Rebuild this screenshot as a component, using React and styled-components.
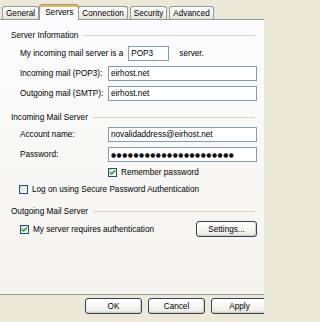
import React from "react";
import styled, { createGlobalStyle } from "styled-components";

const GlobalStyle = createGlobalStyle`
  html, body {
    margin: 0;
    padding: 0;
    background: #ece9d8;
  }
  body {
    font-family: "Liberation Sans", Arial, sans-serif;
    font-size: 8.2px;
    color: #000;
  }
`;

const Dialog = styled.div`
  width: 264px;
  height: 322px;
  display: flex;
  flex-direction: column;
  overflow: hidden;
  background: #ece9d8;
`;

const TabStrip = styled.div`
  height: 19px;
  display: flex;
  align-items: flex-end;
  padding-left: 2px;
`;

const Tab = styled.div`
  position: relative;
  box-sizing: border-box;
  height: ${(p) => (p.$active ? "16px" : "13px")};
  margin: ${(p) => (p.$active ? "0 -1px -1px -2px" : "0 2px 0 0")};
  padding: ${(p) => (p.$active ? "0 5px" : "0 3px")};
  display: flex;
  align-items: center;
  border: 1px solid #919b9c;
  border-bottom: none;
  border-radius: 3px 3px 0 0;
  background: ${(p) =>
    p.$active ? "#fcfcfe" : "linear-gradient(#fefefe, #f0efe9 70%, #e3e1d6)"};
  box-shadow: ${(p) => (p.$active ? "inset 0 2px 0 #f4b545" : "none")};
  z-index: ${(p) => (p.$active ? 1 : 0)};
  white-space: nowrap;
`;

const Panel = styled.div`
  box-sizing: border-box;
  height: 276px;
  border-top: 1px solid #919b9c;
  border-bottom: 1px solid #919b9c;
  background: linear-gradient(#fcfcfe, #f4f3ee);
  padding: 9px 7px 0 11px;
  display: flex;
  flex-direction: column;
`;

const GroupTitle = styled.div`
  height: 12px;
  margin-top: ${(p) => p.$mt || 0}px;
  display: flex;
  align-items: center;
  gap: 5px;
  white-space: nowrap;

  &::after {
    content: "";
    flex: 1;
    height: 1px;
    margin-right: 2px;
    background: #d6d6c8;
  }
`;

const Row = styled.div`
  display: flex;
  align-items: center;
  height: ${(p) => p.$h || 15}px;
  margin-top: ${(p) => p.$mt || 0}px;
  margin-left: ${(p) => (p.$ml === undefined ? 9 : p.$ml)}px;
  padding-left: ${(p) => p.$pl || 0}px;
  white-space: nowrap;
`;

const Label = styled.span`
  width: ${(p) => (p.$w ? `${p.$w}px` : "auto")};
  flex-shrink: 0;
`;

const TextBox = styled.div`
  box-sizing: border-box;
  height: 15px;
  flex: ${(p) => (p.$w ? "none" : 1)};
  min-width: 0;
  width: ${(p) => (p.$w ? `${p.$w}px` : "auto")};
  margin: ${(p) => p.$m || 0};
  border: 1px solid #7f9db9;
  background: #fff;
  padding: 0 2px;
  display: flex;
  align-items: center;
  overflow: hidden;
`;

const Dots = styled.span`
  font-family: "DejaVu Sans", sans-serif;
  font-size: 5.8px;
  letter-spacing: 0.55px;
  color: #111;
`;

const Box = styled.span`
  box-sizing: border-box;
  width: 9px;
  height: 9px;
  margin-right: 4px;
  border: 1px solid #1c5180;
  background: linear-gradient(135deg, #dcdcd7, #fbfbf9);
  display: flex;
  align-items: center;
  justify-content: center;
  flex-shrink: 0;
`;

const Button = styled.div`
  box-sizing: border-box;
  width: ${(p) => p.$w || 57}px;
  height: 16px;
  margin-left: ${(p) => (p.$auto ? "auto" : "0")};
  border: 1px solid #2f4259;
  border-radius: 3px;
  background: linear-gradient(#ffffff, #f1f0eb 80%, #dcd9cd);
  box-shadow: inset -1px -1px 0 #d6d0c5;
  display: flex;
  align-items: center;
  justify-content: center;
  flex-shrink: 0;
`;

const Footer = styled.div`
  display: flex;
  gap: 6px;
  padding: 3px 0 0 85px;
`;

const CheckBox = ({ checked }) => (
  <Box>
    {checked && (
      <svg width="7" height="7" viewBox="0 0 7 7">
        <path d="M0.8 3.2 L2.6 5 L6.2 1.4" fill="none" stroke="#21a121" strokeWidth="1.4" />
      </svg>
    )}
  </Box>
);

const tabs = ["General", "Servers", "Connection", "Security", "Advanced"];

export default function App() {
  return (
    <>
      <GlobalStyle />
      <Dialog>
        <TabStrip>
          {tabs.map((t) => (
            <Tab key={t} $active={t === "Servers"}>
              {t}
            </Tab>
          ))}
        </TabStrip>

        <Panel>
          <GroupTitle>Server Information</GroupTitle>
          <Row $mt={5}>
            <Label>My incoming mail server is a</Label>
            <TextBox $w={41} $m="0 10px 0 5px">POP3</TextBox>
            <Label>server.</Label>
          </Row>
          <Row $mt={5}>
            <Label $w={88}>Incoming mail (POP3):</Label>
            <TextBox>eirhost.net</TextBox>
          </Row>
          <Row $mt={5}>
            <Label $w={88}>Outgoing mail (SMTP):</Label>
            <TextBox>eirhost.net</TextBox>
          </Row>

          <GroupTitle $mt={10}>Incoming Mail Server</GroupTitle>
          <Row $mt={4}>
            <Label $w={88}>Account name:</Label>
            <TextBox>novalidaddress@eirhost.net</TextBox>
          </Row>
          <Row $mt={5}>
            <Label $w={88}>Password:</Label>
            <TextBox>
              <Dots>{"●".repeat(22)}</Dots>
            </TextBox>
          </Row>
          <Row $mt={5} $h={10} $pl={88}>
            <CheckBox checked />
            <Label>Remember password</Label>
          </Row>
          <Row $mt={7} $h={10} $ml={8}>
            <CheckBox />
            <Label>Log on using Secure Password Authentication</Label>
          </Row>

          <GroupTitle $mt={11}>Outgoing Mail Server</GroupTitle>
          <Row $mt={4} $h={16}>
            <CheckBox checked />
            <Label>My server requires authentication</Label>
            <Button $w={61} $auto>
              Settings...
            </Button>
          </Row>
        </Panel>

        <Footer>
          <Button>OK</Button>
          <Button>Cancel</Button>
          <Button>Apply</Button>
        </Footer>
      </Dialog>
    </>
  );
}
